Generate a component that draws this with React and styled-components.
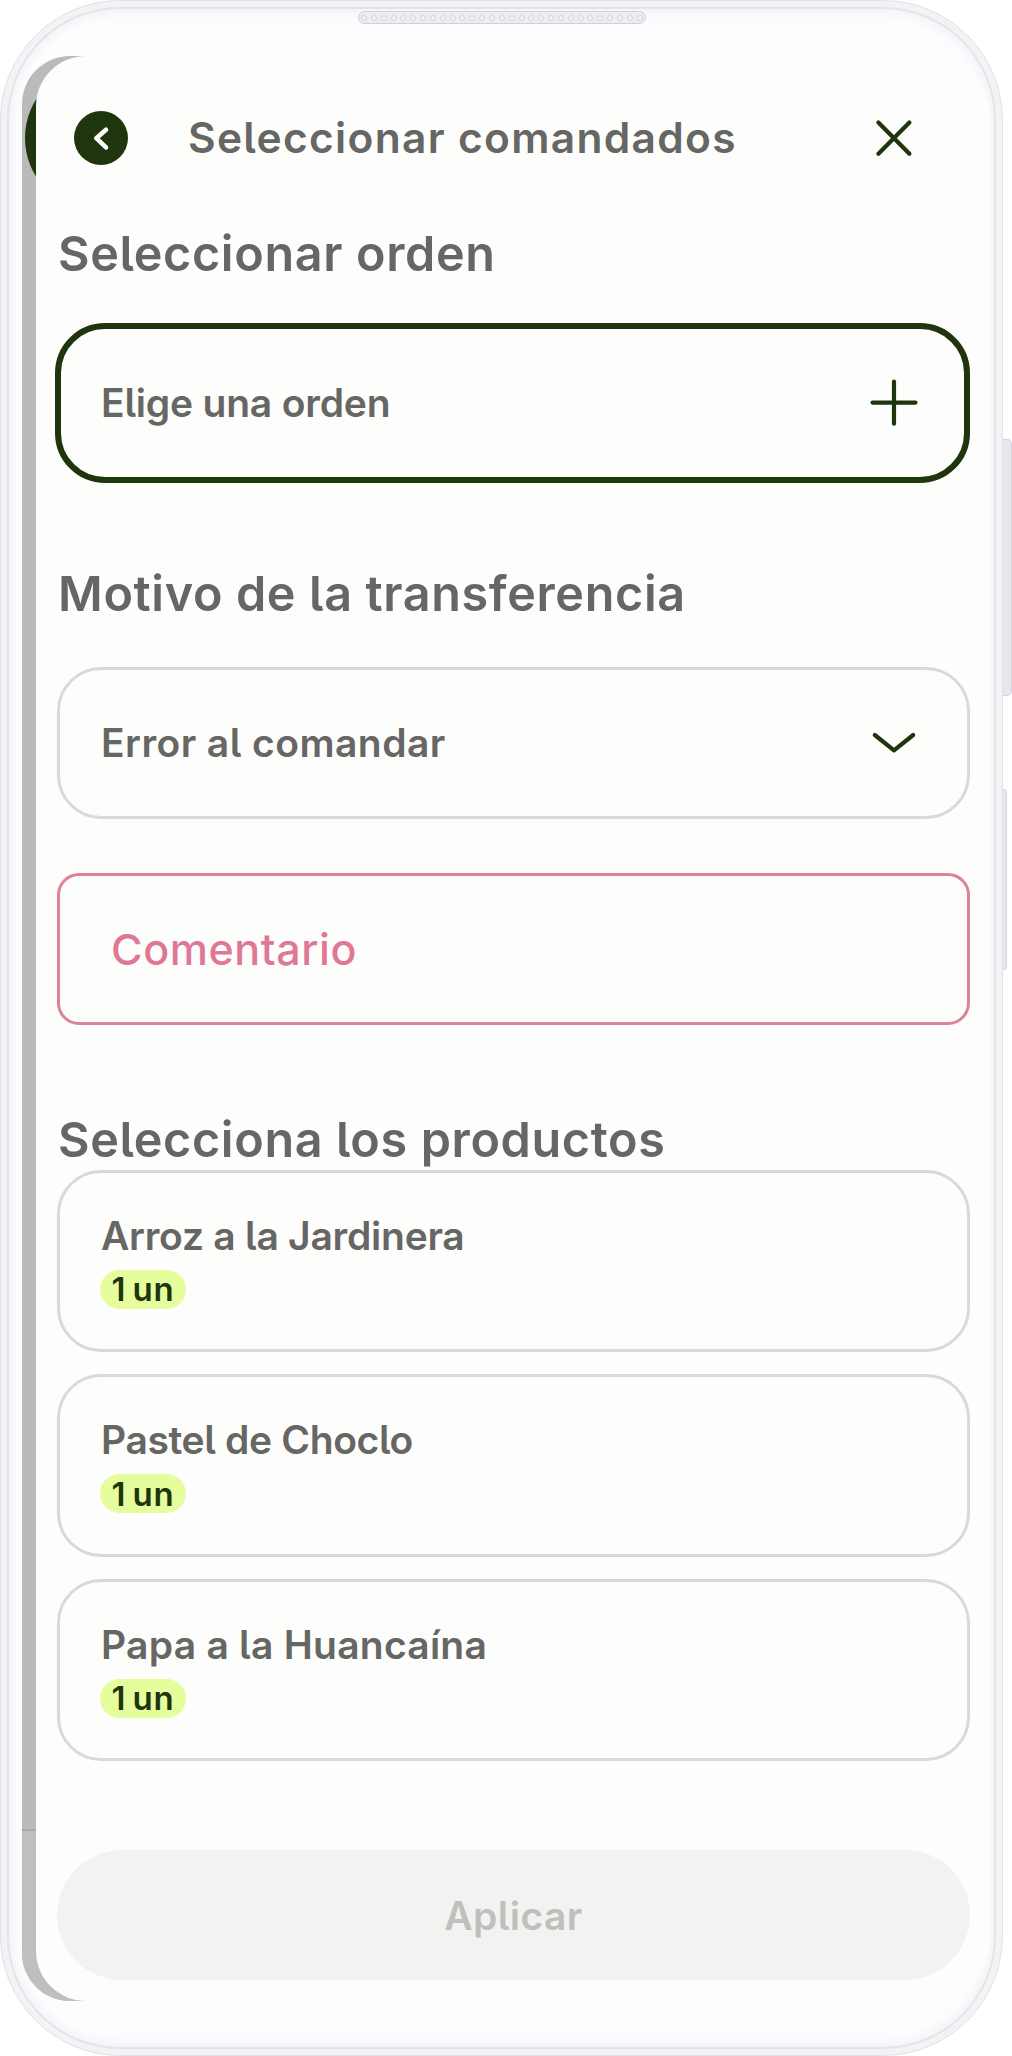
import React from "react";
import styled, { createGlobalStyle } from "styled-components";

const products = [
  { id: 1, name: "Arroz a la Jardinera", spacing: -0.25 },
  { id: 2, name: "Pastel de Choclo", spacing: -0.35 },
  { id: 3, name: "Papa a la Huancaína", spacing: 0.25 },
];

const speakerHoles = Array.from({ length: 29 }, (_, i) => i);

export default function App() {
  return (
    <Stage>
      <GlobalStyle />
      <Phone>
        <Speaker>
          {speakerHoles.map((hole) => (
            <SpeakerHole key={hole} />
          ))}
        </Speaker>

        <Screen>
          {/* pantalla anterior, oscurecida */}
          <BackdropCircle />
          <BackdropLine />

          <Sheet>
            <Header>
              <BackButton aria-label="Volver">
                <svg width="54" height="54" viewBox="0 0 54 54">
                  <path d="M32 18.8 L22.3 27.2 L32 36.4" {...stroke} stroke="#fdfdfb" strokeWidth="4.6" />
                </svg>
              </BackButton>
              <Title>Seleccionar comandados</Title>
              <CloseButton aria-label="Cerrar">
                <svg width="40" height="40" viewBox="0 0 40 40">
                  <path d="M4.4 4.6 L35.4 35.8 M35.4 4.6 L4.4 35.8" {...stroke} />
                </svg>
              </CloseButton>
            </Header>

            <Heading $mt={4} $mb={39}>Seleccionar orden</Heading>
            <Field $active>
              <FieldText $spacing={-0.2}>Elige una orden</FieldText>
              <svg width="52" height="52" viewBox="0 0 52 52">
                <path d="M4.5 25.6 H47.5 M26 4.5 V46.7" {...stroke} />
              </svg>
            </Field>

            <Heading $mt={80.5} $mb={43.5}>Motivo de la transferencia</Heading>
            <Field>
              <FieldText $spacing={0.45}>Error al comandar</FieldText>
              <svg width="52" height="52" viewBox="0 0 52 52">
                <path d="M6.8 18 L26 33.4 L45.2 18" {...stroke} />
              </svg>
            </Field>

            <Comment>Comentario</Comment>

            <Heading $mt={85} $mb={-0.5}>Selecciona los productos</Heading>
            <ProductList>
              {products.map((product) => (
                <Product key={product.id}>
                  <ProductName $spacing={product.spacing}>{product.name}</ProductName>
                  <Units>1 un</Units>
                </Product>
              ))}
            </ProductList>

            <ApplyButton disabled>Aplicar</ApplyButton>
          </Sheet>
        </Screen>
      </Phone>

      <SideButtons>
        <SideButton $width={9} $height={257} />
        <SideButton $width={4} $height={181} />
      </SideButtons>
    </Stage>
  );
}

const stroke = {
  fill: "none",
  stroke: "#1f350e",
  strokeWidth: 4.2,
  strokeLinecap: "round",
  strokeLinejoin: "round",
};

/* ===== styled-components ===== */
const GlobalStyle = createGlobalStyle`
  * {
    box-sizing: border-box;
  }

  body {
    margin: 0;
    background: #fff;
    font-family: Inter, "Liberation Sans", sans-serif;
    font-feature-settings: "cv05" 1;
    color: #666664;
  }

  svg {
    display: block;
    flex-shrink: 0;
  }
`;

const Stage = styled.div`
  display: flex;
  width: 1012px;
  height: 2056px;
  overflow: hidden;
`;

const Phone = styled.div`
  width: 1003px;
  height: 2056px;
  padding: 11px 12px 0 21px;
  border: 1px solid #e2e2e7;
  border-radius: 120px;
  background: #fcfdfe;
  box-shadow:
    inset 0 0 0 6px #f3f3f6,
    inset 0 0 0 8px #e4e5ea,
    inset 0 0 14px 8px #ebecf1;
`;

const Speaker = styled.div`
  display: flex;
  align-items: center;
  justify-content: space-between;
  width: 288px;
  height: 13px;
  margin: -1px 0 0 336px;
  padding: 0 2px;
  border: 1px solid #cfd0d9;
  border-radius: 7px;
  background: #ececf1;
`;

const SpeakerHole = styled.span`
  width: 6px;
  height: 6px;
  border: 1px solid #d3d4dc;
  border-radius: 50%;
  background: #f4f4f7;
`;

const Screen = styled.div`
  position: relative;
  height: 1945px;
  margin-top: 32px;
  padding-left: 13.5px;
  border-radius: 48px 60px 60px 48px;
  background: linear-gradient(90deg, #bababa 120px, transparent 120px);
  overflow: hidden;
`;

const BackdropCircle = styled.div`
  position: absolute;
  top: 9px;
  left: 3px;
  width: 146px;
  height: 146px;
  border-radius: 50%;
  background: #1f350e;
`;

const BackdropLine = styled.div`
  position: absolute;
  top: 1773px;
  left: 0;
  width: 120px;
  height: 172px;
  border-top: 2px solid #a9a9a8;
  background: #bfbfbe;
`;

const Sheet = styled.div`
  position: relative;
  display: flex;
  flex-direction: column;
  width: 954.5px;
  height: 100%;
  padding: 0 20px 0 21.5px;
  border-radius: 50px 60px 60px 50px;
  background: #fdfdfb;
`;

const Header = styled.header`
  display: flex;
  align-items: center;
  height: 164px;
  padding: 0 56px 0 17px;
`;

const BackButton = styled.button`
  width: 54px;
  height: 54px;
  padding: 0;
  border: none;
  border-radius: 50%;
  background: #1f350e;
`;

const Title = styled.h1`
  flex: 1;
  margin: 0 0 0 60px;
  font-size: 42.5px;
  font-weight: 600;
  line-height: 60px;
  letter-spacing: 1.3px;
  white-space: nowrap;
`;

const CloseButton = styled.button`
  width: 40px;
  height: 40px;
  padding: 0;
  border: none;
  background: none;
`;

const Heading = styled.h2`
  margin: ${({ $mt }) => $mt}px 0 ${({ $mb }) => $mb}px;
  padding-left: 1px;
  font-size: 48.5px;
  font-weight: 600;
  line-height: 60px;
  letter-spacing: 0.65px;
  white-space: nowrap;
`;

const Field = styled.div`
  display: flex;
  align-items: center;
  justify-content: space-between;
  height: ${({ $active }) => ($active ? 160 : 152)}px;
  margin: 0 0 0 ${({ $active }) => ($active ? -2 : 0)}px;
  padding: 0 ${({ $active }) => ($active ? "44px 0 40px" : "47px 0 41px")};
  border: ${({ $active }) => ($active ? "6px solid #1f350e" : "3px solid #d9d9d7")};
  border-radius: ${({ $active }) => ($active ? 50 : 44)}px;
`;

const FieldText = styled.span`
  font-size: 39px;
  font-weight: 600;
  line-height: 50px;
  letter-spacing: ${({ $spacing }) => $spacing}px;
  white-space: nowrap;
`;

const Comment = styled.div`
  height: 152px;
  margin-top: 54px;
  padding-left: 51px;
  border: 3px solid #dc829d;
  border-radius: 22px;
  font-size: 43px;
  font-weight: 500;
  line-height: 146px;
  letter-spacing: 0.6px;
  color: #df7896;
`;

const ProductList = styled.div`
  display: flex;
  flex-direction: column;
  gap: 22px;
`;

const Product = styled.div`
  height: 182.6px;
  padding: 38px 0 0 40px;
  border: 3px solid #d9d9d7;
  border-radius: 44px;
`;

const ProductName = styled.div`
  padding-left: 1px;
  font-size: 39px;
  font-weight: 600;
  line-height: 50px;
  letter-spacing: ${({ $spacing }) => $spacing}px;
`;

const Units = styled.span`
  display: flex;
  align-items: center;
  justify-content: center;
  width: 86px;
  height: 39px;
  margin-top: 9px;
  border-radius: 20px;
  background: #e6fd9e;
  font-size: 33px;
  font-weight: 600;
  letter-spacing: 0.8px;
  word-spacing: -3px;
  color: #1f350e;
`;

const ApplyButton = styled.button`
  flex-shrink: 0;
  height: 130px;
  margin-top: 89px;
  border: none;
  border-radius: 65px;
  background: #f2f2f1;
  font-family: inherit;
  font-feature-settings: inherit;
  font-size: 39px;
  font-weight: 600;
  letter-spacing: 0.4px;
  color: #bfbfbd;
`;

const SideButtons = styled.div`
  display: flex;
  flex-direction: column;
  gap: 93px;
  padding-top: 439px;
`;

const SideButton = styled.div`
  width: ${({ $width }) => $width}px;
  height: ${({ $height }) => $height}px;
  border: 1px solid #d3d4dc;
  border-left: none;
  border-radius: 0 5px 5px 0;
  background: #e6e6eb;
`;
